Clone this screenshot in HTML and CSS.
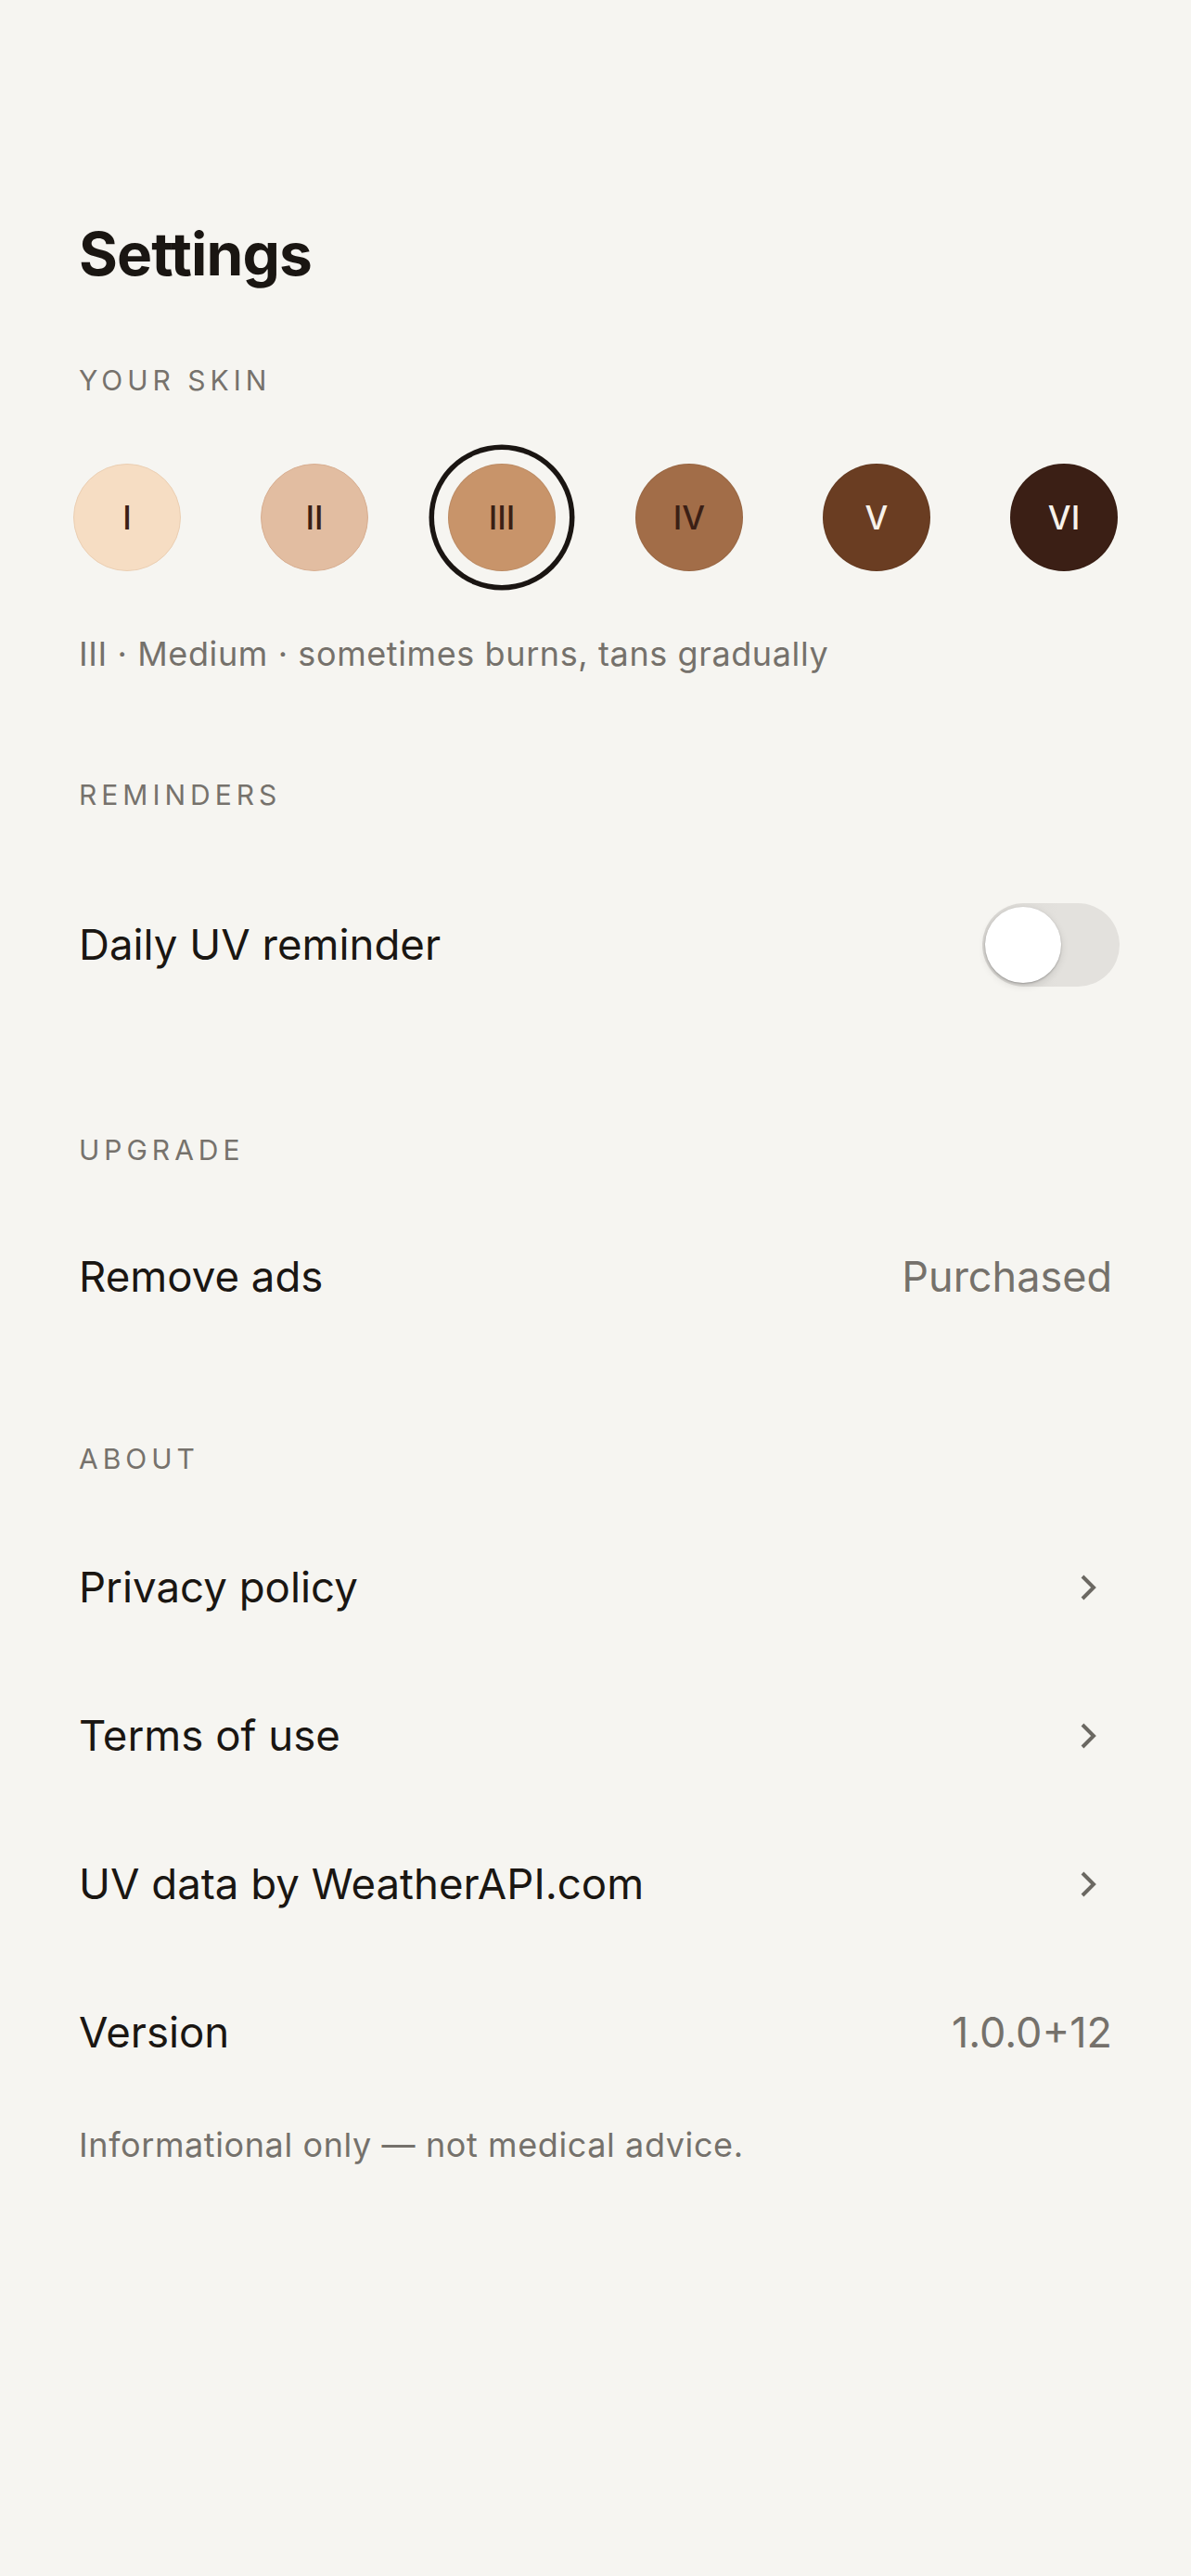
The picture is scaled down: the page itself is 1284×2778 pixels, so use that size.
FILE: index.html
```html
<!DOCTYPE html>
<html lang="en">

<head>
    <link rel="stylesheet" href="styles.css">
</head>

<body>
    <div class="page">
        <h1 class="title">Settings</h1>

        <div class="section section-skin">
            <div class="label">YOUR SKIN</div>
            <div class="skin-row">
                <div class="skin skin-1">I</div>
                <div class="skin skin-2">II</div>
                <div class="skin skin-3 selected">III</div>
                <div class="skin skin-4">IV</div>
                <div class="skin skin-5">V</div>
                <div class="skin skin-6">VI</div>
            </div>
            <p class="skin-desc">III · Medium · sometimes burns, tans gradually</p>
        </div>

        <div class="section section-first">
            <div class="label">REMINDERS</div>
            <div class="row row-toggle">
                <span class="row-title">Daily UV reminder</span>
                <div class="toggle">
                    <div class="thumb"></div>
                </div>
            </div>
        </div>

        <div class="section">
            <div class="label">UPGRADE</div>
            <div class="row">
                <span class="row-title">Remove ads</span>
                <span class="row-value">Purchased</span>
            </div>
        </div>

        <div class="section section-about">
            <div class="label">ABOUT</div>
            <div class="row">
                <span class="row-title">Privacy policy</span>
                <svg class="chevron" viewBox="0 0 40 40"><path d="M8 8 L20 20 L8 32" /></svg>
            </div>
            <div class="row">
                <span class="row-title">Terms of use</span>
                <svg class="chevron" viewBox="0 0 40 40"><path d="M8 8 L20 20 L8 32" /></svg>
            </div>
            <div class="row">
                <span class="row-title">UV data by WeatherAPI.com</span>
                <svg class="chevron" viewBox="0 0 40 40"><path d="M8 8 L20 20 L8 32" /></svg>
            </div>
            <div class="row">
                <span class="row-title">Version</span>
                <span class="row-value">1.0.0+12</span>
            </div>
            <p class="footnote">Informational only — not medical advice.</p>
        </div>
    </div>
</body>

</html>
```

FILE: styles.css
```css
body {
    font-family: Inter, "Noto Sans", sans-serif;
    background-color: #F6F5F1;
    color: #1A1612;
    margin: 0;
    padding: 0;
}

.page {
    padding: 236px 85px 200px;
}

.title {
    margin: 0;
    font-size: 64px;
    line-height: 76px;
    font-weight: 700;
    letter-spacing: -0.9px;
}

.section {
    margin-top: 98px;
}

.section.section-skin {
    margin-top: 80px;
}

.section.section-first {
    margin-top: 112px;
}

.label {
    font-size: 30px;
    line-height: 36px;
    letter-spacing: 5px;
    color: #76726C;
}

.skin-row {
    display: flex;
    justify-content: space-between;
    align-items: center;
    height: 158px;
    margin: 51px -6px 0;
}

.skin {
    width: 116px;
    height: 116px;
    border-radius: 50%;
    display: flex;
    justify-content: center;
    align-items: center;
    box-sizing: border-box;
    border: 1.5px solid rgba(0, 0, 0, 0.06);
    font-size: 35px;
    font-weight: 500;
    color: #3B1F15;
}

.skin-1 { background: #F6DDC3; border-color: #EBCFB3; }
.skin-2 { background: #E2BDA1; border-color: #D8AF92; }
.skin-3 { background: #C8946A; }
.skin-4 { background: #A26D48; }
.skin-5 { background: #6A3D22; color: #F7F2EB; }
.skin-6 { background: #3B1F15; color: #F7F2EB; }

.skin.selected {
    box-shadow: 0 0 0 15px #F6F5F1, 0 0 0 20.5px #1A1512;
}

.skin-desc {
    margin: 46px 0 0;
    font-size: 36px;
    line-height: 44px;
    letter-spacing: 0.6px;
    color: #75716B;
}

.row {
    display: flex;
    justify-content: space-between;
    align-items: center;
    height: 160px;
}

.label + .row {
    margin-top: 39px;
}

.section-about .label + .row {
    margin-top: 41px;
}

.row-toggle {
    height: 210px;
}

.row-title {
    font-size: 45.6px;
    line-height: 56px;
}

.row-value {
    font-size: 45px;
    line-height: 56px;
    color: #75716B;
}

.toggle {
    width: 148px;
    height: 90px;
    margin-right: -8px;
    border-radius: 45px;
    background: linear-gradient(90deg, #D9D7D3 0%, #E3E1DD 55%, #E3E1DD 100%);
    display: flex;
    align-items: center;
    padding: 0 3px;
    box-sizing: border-box;
}

.thumb {
    width: 82px;
    height: 82px;
    border-radius: 50%;
    background: #FFFFFF;
    box-shadow: 0 1px 2px rgba(0, 0, 0, 0.25), 0 3px 8px rgba(0, 0, 0, 0.12);
}

.chevron {
    width: 40px;
    height: 40px;
}

.chevron path {
    fill: none;
    stroke: #6B6862;
    stroke-width: 4;
}

.footnote {
    margin: 21px 0 0;
    font-size: 36px;
    line-height: 40px;
    letter-spacing: 0.6px;
    color: #75716B;
}
```
